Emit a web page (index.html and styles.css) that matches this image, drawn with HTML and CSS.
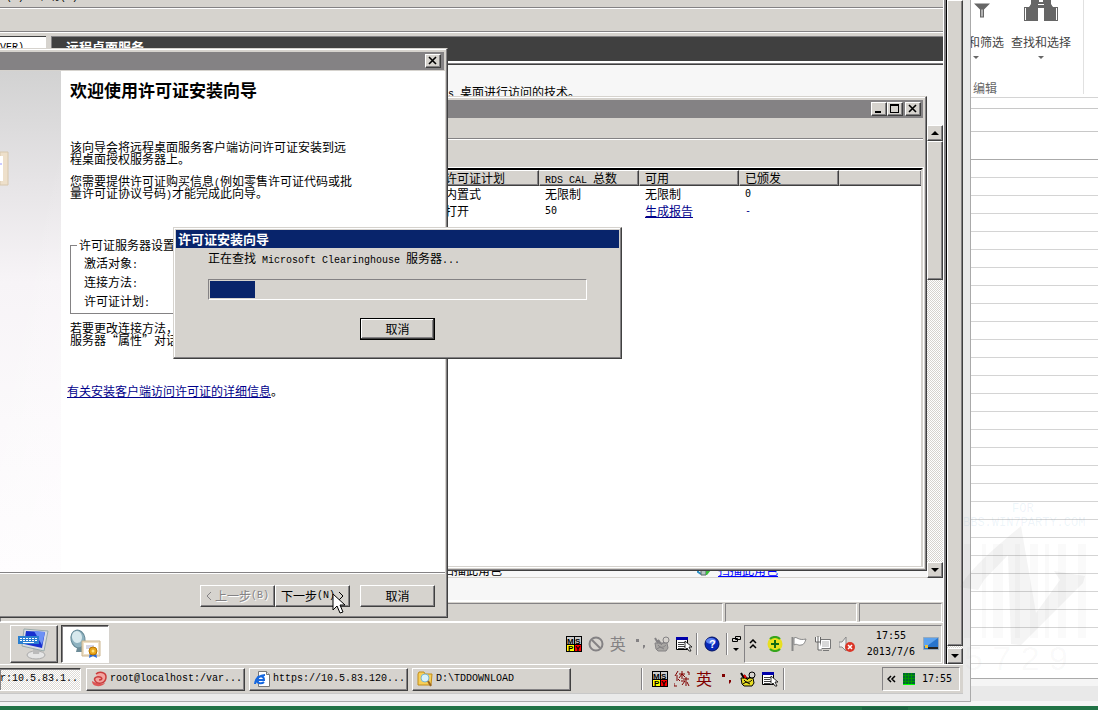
FILE: index.html
```html
<!DOCTYPE html>
<html lang="zh-CN">
<head>
<meta charset="utf-8">
<title>许可证安装向导</title>
<link rel="stylesheet" href="styles.css">
</head>
<body>
<svg width="0" height="0" class="defs" aria-hidden="true">
  <symbol id="mspy" viewBox="0 0 16 16"><path d="M0 0h16v16H0z" fill="#000"/><path d="M1 1h7v7H1zM9 1h6v7H9z" fill="#ccc"/><path d="M1 9h7v6H1z" fill="#ff0"/><path d="M9 9h6v6H9z" fill="#f00"/><g font-family="Liberation Sans" font-weight="bold" font-size="8"><text x="1" y="8">M</text><text x="9" y="8">S</text><text x="2" y="15">P</text><text x="9" y="15">Y</text></g></symbol>
  <symbol id="list" viewBox="0 0 16 16"><path d="M.5 1.500h11v12H.5z" fill="#fff" stroke="#000"/><path d="M0 1h12v3H0z" fill="#00a"/><path d="M2 6.500h7M2 8.500h6M2 10.500h7M2 12.500h6" stroke="#444"/><path d="M9 5v9l2-2 2 3h2l-2-4h3z" fill="#fff" stroke="#000" stroke-width=".8"/></symbol>
  <symbol id="pot" viewBox="0 0 16 16"><path d="M1 7h12l1 5-2 3H4l-2-2z" fill="var(--pot)" stroke="var(--ink)"/><path d="M1 2l3 5M4 4l3 4" stroke="var(--ink)" stroke-width="2"/><path d="M4 4l2 3" stroke="var(--red)" stroke-width="2"/><circle cx="12" cy="4" r="3" fill="#d6d3ce" stroke="var(--ink)"/><path d="M10 6L7 9M4 9c3 4 6 2 8 0M3 13l3-2 4 2" stroke="var(--ink)" fill="none"/></symbol>
</svg>
<main class="desktop">
  <div class="workspace">
    <section class="remote">
      <div class="session">
        <div class="server">
          <nav class="menubar"><span class="lat">(V)</span><span>帮助<span class="lat">(H)</span></span></nav>
          <div class="toolbar"></div>
          <div class="manager">
            <div class="tree"><span class="lat">VER)</span></div>
            <div class="detail">
              <h2 class="role-title">远程桌面服务</h2>
              <div class="role">
                <p class="role-note"><span class="lat">s </span>桌面进行访问的技术。</p>
                <div class="role-foot">
                  <span>扫描此角色</span>
                  <span class="scan"><svg width="16" height="12" viewBox="0 0 16 12"><path d="M2 2v6l3 2" fill="none" stroke="#2a8fc5" stroke-width="2"/><path d="M5 1h5v10H5z" fill="#b8c4c4" stroke="#566"/><path d="M10 3l5 3-4 5h-1z" fill="#3ac03a"/></svg><a href="#scan">扫描此角色</a></span>
                </div>
              </div>
              <div class="scroll role-scroll"><span class="sbtn up"></span><span class="thumb"></span><span class="sbtn down"></span></div>
            </div>
          </div>
          <div class="status"><span></span><span></span><span></span></div>
          <footer class="bar server-bar">
            <button class="app" aria-label="屏幕键盘"><svg width="32" height="32" viewBox="0 0 32 32"><ellipse cx="18" cy="27" rx="9" ry="4" fill="#e5e5e5" stroke="#aaa"/><path d="M15 18h8l-2 8h-6z" fill="#bbb"/><path d="M6 1l24 2-4 20-22-5z" fill="#d8dce4" stroke="#9aa"/><path d="M8 3l19 1-3 16-18-4z" fill="#1730cf"/><path d="M16 3l11 1-3 13z" fill="#6c91f5"/><path d="M0 8h21v8H0z" fill="#2b7fd0"/><path d="M2 10.500h17M2 12.500h17" stroke="#fff" stroke-dasharray="2 1"/><path d="M5 14.500h11" stroke="#fff"/></svg></button>
            <button class="app pressed" aria-label="许可证管理器"><svg width="32" height="32" viewBox="0 0 32 32"><ellipse cx="9" cy="11" rx="7" ry="9" transform="rotate(-12 9 11)" fill="#8eb2c0" stroke="#648896"/><ellipse cx="8" cy="9" rx="5" ry="6" transform="rotate(-12 8 9)" fill="#d7e8ed"/><path d="M8 20l5-1 4 5H7z" fill="#6d8c98"/><path d="M13 13h18v15H13z" fill="#efe0c7" stroke="#cbb58f"/><path d="M15 15h14v11H15z" fill="#fff"/><path d="M17 18h8M17 20h5" stroke="#aac"/><path d="M21 24l-1 6 4-2 4 2-1-6z" fill="#2869d8"/><circle cx="24" cy="23" r="4" fill="#e9a51a" stroke="#b87500"/><circle cx="24" cy="23" r="1.500" fill="#ffe27b"/></svg></button>
            <div class="ime off">
              <svg><use href="#mspy"/></svg>
              <svg viewBox="0 0 16 16"><circle cx="8" cy="8" r="6.500" fill="none" stroke="#848284" stroke-width="2"/><path d="M4 4l8 8" stroke="#848284" stroke-width="2"/></svg>
              <span class="ying">英</span>
              <svg viewBox="0 0 16 16"><path d="M4 3h3v3H4zM11 9h2v2l-2 2z" fill="currentColor"/></svg>
              <svg><use href="#pot"/></svg>
              <svg><use href="#list"/></svg>
            </div>
            <i class="sep"></i>
            <svg class="help" width="16" height="16" viewBox="0 0 16 16"><circle cx="8" cy="8" r="7" fill="#0828b8" stroke="#001060"/><ellipse cx="7" cy="5" rx="5" ry="3" fill="#5c80ef"/><text x="5" y="12" font-family="Liberation Sans" font-size="11" font-weight="bold" fill="#fff">?</text></svg>
            <i class="sep"></i>
            <svg width="10" height="18" viewBox="0 0 10 18"><path d="M3.500 1.500h5v3h-5zM.5 3.500h5v3h-5z" fill="#d6d3ce" stroke="#000"/><path d="M1 13h6l-3 3z"/></svg>
            <div class="tray server-tray">
              <svg class="chev" width="8" height="10" viewBox="0 0 8 10"><path d="M1 4l3-3 3 3M1 9l3-3 3 3" fill="none" stroke="#000" stroke-width="1.500"/></svg>
              <svg viewBox="0 0 16 16"><circle cx="8" cy="8" r="7.500" fill="#e8e020"/><path d="M3 3A7 7 0 0 1 13 3M13 13A7 7 0 0 1 3 13" fill="none" stroke="#35a51c" stroke-width="2"/><path d="M8 4v8M4 8h8" stroke="#126a12" stroke-width="2"/></svg>
              <svg viewBox="0 0 16 16"><path d="M1.500 1v14" stroke="#888" stroke-width="2"/><path d="M3 2c3-2 4 3 12 1-1 3-2 6-5 6-3 1-4-2-7 0z" fill="#fff" stroke="#888"/></svg>
              <svg viewBox="0 0 16 16"><path d="M5.500 3.500h10v9h-10z" fill="#d8d8d8" stroke="#777"/><path d="M6.500 4.500h8v7h-8z" fill="none" stroke="#fff"/><path d="M8 14.500h6" stroke="#777"/><path d="M.5 1v5h5V1M3 0v14h4" fill="#fff" stroke="#666"/></svg>
              <svg viewBox="0 0 16 16"><path d="M0 6h3l4-5v14l-4-4H0z" fill="#eee" stroke="#888"/><circle cx="11" cy="11" r="5" fill="#db3527"/><path d="M9 9l4 4M13 9l-4 4" stroke="#fff" stroke-width="1.500"/></svg>
              <time class="clock">17:55<br>2013/7/6</time>
              <svg viewBox="0 0 16 16"><path d="M.5 1.500h15v12H.5z" fill="#2774cd" stroke="#9ab"/><path d="M1 2h14L4 10H1z" fill="#5da2ed"/><path d="M5 11h10v2H5z" fill="#222"/><path d="M2 9h3v3H2z" fill="#eec43b"/></svg>
            </div>
          </footer>

          <section class="win license">
            <header class="caption"><button class="cbtn" aria-label="最小化"><svg viewBox="0 0 12 10"><path d="M2 7h6v2H2z"/></svg></button><button class="cbtn" aria-label="最大化"><svg viewBox="0 0 12 10"><path d="M1 0h9v9H1zM2 2v6h7V2z" fill-rule="evenodd"/></svg></button><button class="cbtn gap" aria-label="关闭"><svg viewBox="0 0 12 10"><path d="M2 1l7 7M9 1L2 8" stroke="#000" stroke-width="1.600"/></svg></button></header>
            <div class="lic-menu"></div>
            <div class="lic-tools"></div>
            <div class="listview">
              <table>
                <thead><tr><th>许可证计划</th><th><span class="lat">RDS CAL </span>总数</th><th>可用</th><th>已颁发</th><th></th></tr></thead>
                <tbody>
                  <tr><td>内置式</td><td>无限制</td><td>无限制</td><td class="num">0</td><td></td></tr>
                  <tr><td>打开</td><td class="num">50</td><td><a href="#report">生成报告</a></td><td class="num"><a href="#issued" class="plain">-</a></td><td></td></tr>
                </tbody>
              </table>
            </div>
          </section>

          <section class="win wizard">
            <header class="caption"><button class="cbtn" aria-label="关闭"><svg viewBox="0 0 12 10"><path d="M2 1l7 7M9 1L2 8" stroke="#000" stroke-width="1.600"/></svg></button></header>
            <div class="wiz-body">
              <div class="banner"><svg width="9" height="36" viewBox="0 0 9 36"><path d="M0 1h8v33H0z" fill="#eee0cb" stroke="#d8c8ae"/><path d="M0 5h3v25H0z" fill="#fff"/><path d="M0 13h2" stroke="#99f"/></svg></div>
              <div class="wiz-text">
                <h1>欢迎使用许可证安装向导</h1>
                <p>该向导会将远程桌面服务客户端访问许可证安装到远程桌面授权服务器上。</p>
                <p>您需要提供许可证购买信息<span class="lat">(</span>例如零售许可证代码或批量许可证协议号码<span class="lat">)</span>才能完成此向导。</p>
                <fieldset><legend>许可证服务器设置</legend><span>激活对象<b class="lat">:</b></span><span>连接方法<b class="lat">:</b></span><span>许可证计划<b class="lat">:</b></span></fieldset>
                <p class="hint">若要更改连接方法，<br>服务器“属性”对话</p>
                <p class="more"><a href="#cal">有关安装客户端访问许可证的详细信息</a>。</p>
              </div>
            </div>
            <footer class="wiz-foot">
              <button class="btn" disabled><svg width="6" height="10" viewBox="0 0 6 10"><path d="M5 1L1 5l4 4" fill="none" stroke="#848284"/></svg> 上一步<span class="lat">(B)</span></button><button class="btn">下一步<span class="lat">(N)</span> <svg width="6" height="10" viewBox="0 0 6 10"><path d="M1 1l4 4-4 4" fill="none" stroke="#000"/></svg></button><button class="btn apart">取消</button>
            </footer>
          </section>

          <section class="win dialog">
            <header class="caption active">许可证安装向导</header>
            <div class="dlg-body">
              <p>正在查找<span class="lat"> Microsoft Clearinghouse </span>服务器<span class="lat">...</span></p>
              <div class="progress" role="progressbar" aria-label="查找进度" aria-valuenow="12"><i></i></div>
              <button class="btn default">取消</button>
            </div>
          </section>
          <svg class="cursor" width="13" height="21" viewBox="0 0 13 21"><path d="M1 1v16l4-4 3 7 3-1-3-7h5z" fill="#fff" stroke="#000"/></svg>
        </div>
        <div class="scroll outer-scroll"><span class="thumb"></span><span class="sbtn down"></span></div>
      </div>
      <footer class="bar local-bar">
        <button class="task pressed"><span class="lat">r:10.5.83.1...</span></button>
        <button class="task"><svg width="16" height="16" viewBox="0 0 16 16"><path d="M1 10c0 7 11 6 13 2-5 1-7 1-13-2z" fill="#d55"/><path d="M5 3c3-3 10-2 10 3 0 7-8 7-10 5-3-3-1-6 4-5 3 1 2 3-1 3" fill="#f3a4a0" stroke="#c93c3c" stroke-width="1.500"/></svg><span class="lat">root@localhost:/var...</span></button>
        <button class="task"><svg width="16" height="16" viewBox="0 0 16 16"><path d="M4.500.5h8l3 3v12h-11z" fill="#fff" stroke="#777"/><path d="M12.500.5v3h3" fill="#ddd" stroke="#777"/><path d="M3 9h7c0-5-7-5-7 0 0 4 5 4 7 2M1 13C1 8 6 4 11 4" fill="none" stroke="#1667df" stroke-width="2"/></svg><span class="lat">https://10.5.83.120...</span></button>
        <button class="task"><svg width="16" height="16" viewBox="0 0 16 16"><path d="M1 3l1-2h5l1 2h7l-1 11H1z" fill="#f7cf58" stroke="#c28c18"/><circle cx="8" cy="7" r="4" fill="#d9f2fb" stroke="#7ab5cc"/><path d="M11 10l3 5" stroke="#98621f" stroke-width="2"/></svg><span class="lat">D:\TDDOWNLOAD</span></button>
        <div class="local-ime">
          <i class="sep"></i>
          <div class="ime on">
            <svg><use href="#mspy"/></svg>
            <svg viewBox="0 0 16 16" fill="none" stroke="#800000"><path d="M4 0L1 5M3 4v6M5 3h6M8 0v8M8 3L5 7M8 3l3 3M9 8l6 0M12 6v9M7 10h4l-3 4M13 11l2 4M0 12v3h3M13 1h2v3M6 10l-2-2"/></svg>
            <span class="ying">英</span>
            <svg viewBox="0 0 16 16"><path d="M4 3h3v3H4zM11 9h2v2l-2 2z" fill="currentColor"/></svg>
            <svg><use href="#pot"/></svg>
            <svg><use href="#list"/></svg>
          </div>
          <i class="sep"></i>
        </div>
        <div class="tray local-tray">
          <svg class="chev" width="9" height="8" viewBox="0 0 9 8"><path d="M4 1L1 4l3 3M8 1L5 4l3 3" fill="none" stroke="#000" stroke-width="1.500"/></svg>
          <svg width="12" height="12" viewBox="0 0 12 12"><path d="M0 0h12v12H0z" fill="#063"/><path d="M0 2.500h12M0 5.500h12M0 8.500h12M2.500 0v12M5.500 0v12M8.500 0v12" stroke="#090"/><path d="M0 11.500h12" stroke="#0f0"/></svg>
          <time class="num">17:55</time>
        </div>
      </footer>
    </section>

    <aside class="excel">
      <div class="ribbon">
        <div class="tools">
          <button class="tool sort"><svg width="22" height="14" viewBox="0 0 22 14"><path d="M3 0h16l-6 6v8H9V6z" fill="#666"/><path d="M11 6v7" stroke="#fff"/></svg><span>排序和筛选</span><i></i></button>
          <button class="tool find"><svg width="34" height="21" viewBox="0 0 34 21"><path d="M7 0h8v2h4V0h8v4l2 3h5v14H20V8h-6v13H0V7h5l2-3z" fill="#666"/><path d="M1.500 8v12M32.500 8v12M14 4.500h6M5.500 1v5M28.500 1v5" stroke="#fff"/></svg><span>查找和选择</span><i></i></button>
        </div>
        <span class="group">编辑</span>
      </div>
      <div class="strip"></div>
      <div class="formula"></div>
      <div class="heads"></div>
      <div class="cells"></div>
      <div class="tabs"></div>
    </aside>
    <svg class="mark" width="130" height="176" viewBox="0 0 130 176"><g font-family="Liberation Mono" fill="#4a90c0" fill-opacity=".1"><text x="52" y="12" font-size="12">FOR</text><text x="3" y="26" font-size="12">BBS.WIN7PARTY.COM</text></g><g fill="#777" fill-opacity=".04"><path d="M4 44h7v94H4zM22 44h4v94h-4zM33 44h10v94H33zM55 44h5v94h-5zM70 44h8v94h-8zM85 44h4v94h-4zM98 44h8v94h-8zM118 44h8v94h-8z"/><path d="M61 26C38 46 14 64 0 87l18 3 6-10 24-25 3 89 10 1 62-62 2-7-31-5 6 9-24 33z" fill-opacity=".08"/><text x="4" y="170" font-family="Liberation Sans" font-size="34">5 7 2 9</text></g></svg>
  </div>
  <div class="excel-status"><i></i></div>
</main>
</body>
</html>
```
FILE: styles.css
```css
* { box-sizing: border-box; }
:root { --face: #d6d3ce; --shade: #848284; --dark: #404040; --navy: #08246b; }
body { margin: 0; font: 12px/12px "Noto Sans CJK SC", sans-serif; color: #000; overflow: hidden; }
h1, h2, p { margin: 0; font-weight: normal; }
button { font: inherit; color: inherit; padding: 0; margin: 0; border: 0; background: var(--face); }
svg { display: block; flex: none; }
i { display: block; flex: none; }
a { color: #00008b; }
.defs { position: absolute; }
.lat, .num { font-family: "Liberation Mono", monospace; font-size: 10px; line-height: 6px; font-weight: normal; white-space: pre; }
.num { font-family: "DejaVu Sans Mono", monospace; line-height: 12px; }

.desktop { display: flex; flex-direction: column; height: 100vh; background: #f3f3f3; }
.workspace { flex: 1; min-height: 0; display: flex; position: relative; }
.remote { flex: 1; min-width: 0; display: flex; flex-direction: column; margin-bottom: 4px; padding: 0 7px 7px 0; background: #eaeaea; border: solid #aaa; border-width: 0 1px 1px 0; }
.session { flex: 1; min-height: 0; display: flex; }
.server { flex: 1; min-width: 0; display: flex; flex-direction: column; position: relative; overflow: hidden; background: var(--face); border-right: 1px solid #fff; }

.menubar { display: flex; gap: 12px; height: 8px; padding: 0 0 6px 6px; align-items: flex-end; overflow: hidden; border-bottom: 1px solid var(--shade); }
.toolbar { height: 24px; border-top: 1px solid #fff; border-bottom: 1px solid var(--shade); }
.manager { flex: 1; min-height: 0; display: flex; gap: 5px; padding-top: 3px; border-top: 1px solid #fff; }
.tree { width: 46px; padding-top: 2px; background: #fff; border-top: 1px solid var(--dark); }
.detail { flex: 1; display: grid; grid-template: 26px 1fr / 1fr 16px; border-left: 1px solid var(--shade); border-top: 1px solid var(--shade); border-bottom: 2px solid #fff; background: #f7f7f7; }
.role-title { grid-column: 1 / 3; padding: 3px 14px; font-size: 13px; line-height: 14px; font-weight: bold; color: #fff; background: var(--dark); border-bottom: 2px solid #fff; box-shadow: 0 1px var(--shade), 0 2px var(--dark); }
.role { display: flex; flex-direction: column; justify-content: space-between; padding: 23px 0 22px 396px; }
.role-foot { display: flex; justify-content: space-between; padding: 0 149px 1px 0; margin-left: -6px; border-bottom: 1px solid #d6d3ce; }
.scan { display: flex; gap: 6px; }
.scan a { color: #00f; }
.scroll { display: flex; flex-direction: column; background: repeating-conic-gradient(#fff 0 25%, var(--face) 0 50%) 0 0 / 2px 2px; }
.role-scroll { margin: 62px 0 22px; }
.role-scroll .thumb { height: 139px; }
.role-scroll .down { margin-top: auto; }
.outer-scroll { width: 19px; padding-left: 1px; border-left: 2px solid var(--shade); box-shadow: inset 1px 0 #000; }
.outer-scroll .thumb { flex: 1; margin-bottom: 2px; }
.thumb, .sbtn, .btn, .cbtn, .task, .app { background: var(--face); border: 1px solid; border-color: #fff var(--dark) var(--dark) #fff; box-shadow: inset -1px -1px var(--shade); }
.sbtn { height: 16px; display: grid; place-items: center; }
.sbtn::after { content: ""; border: solid transparent; border-width: 0 4px 4px; border-bottom-color: #000; }
.sbtn.down::after { border-width: 4px 4px 0; border-top-color: #000; }

.status { display: flex; gap: 2px; height: 20px; padding: 1px 1px 0 0; }
.status span { border: 1px solid; border-color: var(--shade) #fff #fff var(--shade); }
.status span:nth-child(1) { flex: 1; }
.status span:nth-child(2) { width: 132px; }
.status span:nth-child(3) { width: 83px; }

.bar { display: flex; align-items: center; background: var(--face); border-top: 1px solid #fff; }
.server-bar { height: 42px; padding: 1px 1px 0 10px; }
.app { width: 48px; height: 38px; display: grid; place-items: center; margin-right: 3px; }
.pressed { background: #fff; border-color: var(--dark) #fff #fff var(--dark); box-shadow: inset 1px 1px var(--shade); }
.ime { display: flex; gap: 6px; --ink: #000; --pot: #e6dc25; --red: #e00; color: #800000; }
.ime svg, .server-tray svg:not(.chev) { width: 16px; height: 16px; }
.off { margin-left: auto; color: var(--shade); --ink: #848284; --pot: #a9a7a4; --red: #848284; }
.ying { width: 16px; font-size: 16px; line-height: 14px; }
.sep { width: 2px; height: 22px; margin: 0 4px; background: #fff; border-left: 1px solid var(--shade); }
.help { margin: 0 2px; }
.tray { display: flex; align-items: center; border: 1px solid; border-color: var(--shade) #fff #fff var(--shade); }
.server-tray { height: 38px; gap: 8px; margin-left: 2px; padding: 0 2px 0 4px; }
.server-tray .chev { margin-right: 2px; }
.clock { font: 10px/16px "DejaVu Sans Mono", monospace; text-align: center; margin: 0 0 0 4px; }

.local-bar { height: 30px; gap: 4px; padding-right: 3px; border-bottom: 1px solid #c8c8c8; }
.task { width: 159px; height: 23px; display: flex; align-items: center; gap: 3px; padding-left: 4px; overflow: hidden; }
.task .lat { line-height: 12px; }
.task.pressed { width: 82px; padding: 0; margin-left: -1px; margin-right: 1px; background: repeating-conic-gradient(#fff 0 25%, #dedbd6 0 50%) 0 0 / 2px 2px; }
.local-ime { display: flex; align-items: center; margin-left: auto; gap: 4px; }
.local-ime .sep { margin: 0 1px; }
.local-tray { height: 24px; width: 78px; margin-left: 92px; gap: 7px; padding-left: 4px; }
.local-ime .ime { margin-left: 4px; }

.win { position: absolute; display: flex; flex-direction: column; background: var(--face); border: 1px solid; border-color: var(--face) var(--dark) var(--dark) var(--face); box-shadow: inset -1px -1px var(--shade), inset 0 1px #fff; }
.caption { display: flex; align-items: center; justify-content: flex-end; height: 18px; flex: none; padding-right: 2px; background: var(--shade); }
.caption.active { justify-content: flex-start; padding: 0 2px; font-size: 13px; font-weight: bold; color: #fff; background: var(--navy); }
.cbtn { width: 16px; height: 14px; display: grid; place-items: center; }
.cbtn svg { width: 12px; height: 10px; }
.cbtn.gap { margin-left: 2px; }

.license { left: 439px; right: 16px; top: 96px; bottom: 93px; padding: 3px 3px 3px 0; border-left: 0; }
.lic-menu { height: 21px; border-bottom: 1px solid var(--shade); }
.lic-tools { height: 29px; border-top: 1px solid #fff; }
.listview { flex: 1; background: #fff; border: solid; border-width: 2px 2px 1px 0; border-color: #000 var(--face) var(--face); outline: 1px solid #fff; }
table { width: 100%; table-layout: fixed; border-collapse: separate; border-spacing: 0; }
th, td { width: 100px; padding: 0 0 2px 6px; height: 17px; text-align: left; font-weight: normal; white-space: nowrap; }
th { height: 16px; background: var(--face); border: 1px solid; border-color: #fff var(--dark) var(--dark) var(--face); box-shadow: inset -1px -1px var(--shade); padding: 0 0 0 5px; line-height: 12px; }
th:last-child { width: auto; border-right: 0; }
.plain { text-decoration: none; }

.wizard { left: 0; width: 448px; top: 48px; bottom: 46px; padding: 3px 2px 2px 0; border-left: 0; }
.wizard .caption { padding-right: 3px; margin-right: 1px; }
.wiz-body { flex: 1; display: flex; margin-top: 1px; background: #fff; border-bottom: 1px solid var(--shade); }
.banner { width: 61px; padding-top: 80px; background: linear-gradient(105deg, rgba(255,255,255,0) 40%, rgba(255,255,255,.4)), linear-gradient(#d2d2d2, #e6e4e6 22%, #f7f4f7 42%, #fbf9fb 70%, #fefcfe); }
.wiz-text { flex: 1; padding: 9px 90px 0 9px; }
h1 { font-size: 17px; line-height: 20px; font-weight: bold; margin-bottom: 41px; }
.wiz-text p { margin-bottom: 10px; }
fieldset { display: flex; flex-direction: column; gap: 7px; margin: 40px 0 8px; padding: 6px 0 6px 13px; border: 1px solid var(--shade); }
legend { margin-left: -7px; padding: 0 2px; }
.wiz-text .hint { margin-bottom: 39px; }
.wiz-text .more { margin-left: -3px; }
.wiz-foot { display: flex; height: 42px; padding: 11px 10px 0 0; justify-content: flex-end; align-items: flex-start; border-top: 1px solid #fff; }
.btn { width: 75px; height: 22px; display: inline-flex; align-items: center; justify-content: center; gap: 3px; white-space: nowrap; }
.btn .lat { margin-left: -3px; line-height: 12px; }
.btn:disabled { color: var(--shade); text-shadow: 1px 1px #fff; }
.apart { margin-left: 10px; }

.dialog { left: 173px; top: 227px; width: 449px; padding: 2px; box-shadow: inset -1px -1px var(--shade), inset 1px 1px #fff; }
.dlg-body { display: flex; flex-direction: column; padding: 4px 32px 16px; }
.progress { height: 21px; margin: 15px 0 18px; padding: 1px; border: 1px solid; border-color: var(--shade) #fff #fff var(--shade); }
.progress i { width: 45px; height: 17px; background: var(--navy); }
.default { align-self: center; border-color: #000; box-shadow: inset -1px -1px var(--dark), inset 1px 1px #fff, inset -2px -2px var(--shade); }
.cursor { position: absolute; left: 332px; top: 593px; }

.excel { width: 127px; display: flex; flex-direction: column; background: #fff; color: #444; overflow: hidden; }
.ribbon { height: 98px; border-bottom: 1px solid #d4d4d4; }
.tools { display: flex; gap: 7px; width: 113px; height: 82px; border-right: 1px solid #e1e1e1; }
.tool { display: flex; flex-direction: column; align-items: center; background: none; white-space: nowrap; }
.tool svg { height: 21px; margin-bottom: 15px; }
.tool i { margin-top: 8px; border: solid transparent; border-width: 3px 3px 0; border-top-color: #666; }
.sort { width: 33px; align-items: flex-end; }
.sort svg { margin-right: 11px; }
.sort i { margin-right: 25px; }
.group { display: block; width: 113px; padding-left: 2px; border-right: 1px solid #e1e1e1; color: #666; }
.strip { height: 11px; border-bottom: 1px solid #c8c8c8; }
.formula { height: 23px; border-bottom: 1px solid #c8c8c8; }
.heads { height: 28px; border-bottom: 1px solid #aaa; }
.cells { flex: 1; background: repeating-linear-gradient(#fff 0 17px, #d4d4d4 17px 18px); }
.tabs { height: 28px; background: linear-gradient(#f5f5f5 7px, #e9e9e9 7px 22px, #f5f5f5 22px); border-top: 1px solid #aaa; }
.mark { position: absolute; right: 8px; bottom: 30px; pointer-events: none; }
.excel-status { height: 4px; background: #217346; }
.excel-status i { width: 46px; height: 3px; margin: 1px 190px 0 auto; background: #1a6240; }
```
